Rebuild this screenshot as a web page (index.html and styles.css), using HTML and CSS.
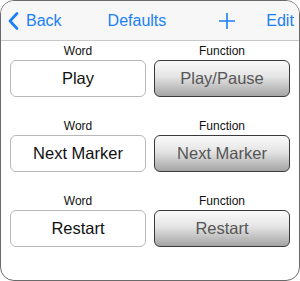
FILE: index.html
```html
<!DOCTYPE html>
<html lang="en">
<head>
    <meta charset="UTF-8">
    <meta name="viewport" content="width=device-width, initial-scale=1.0">
    <title>Defaults</title>
    <link rel="stylesheet" href="styles.css">
</head>
<body>
    <div class="frame">
        <div class="navbar">
            <a class="nav-back" href="#">
                <svg class="chevron" width="11" height="18" viewBox="0 0 11 18">
                    <path d="M9 1.5 L2 9 L9 16.5" fill="none" stroke="#1a7ff6" stroke-width="2.6" stroke-linecap="round" stroke-linejoin="round"/>
                </svg>
                <span>Back</span>
            </a>
            <span class="nav-title">Defaults</span>
            <a class="nav-add" href="#">
                <svg width="18" height="18" viewBox="0 0 18 18">
                    <path d="M9 1 V17 M1 9 H17" fill="none" stroke="#1a7ff6" stroke-width="1.6"/>
                </svg>
            </a>
            <a class="nav-edit" href="#">Edit</a>
        </div>

        <div class="list">
            <div class="row">
                <div class="cell">
                    <div class="label">Word</div>
                    <div class="word-box">Play</div>
                </div>
                <div class="cell">
                    <div class="label">Function</div>
                    <button class="func-btn">Play/Pause</button>
                </div>
            </div>
            <div class="row">
                <div class="cell">
                    <div class="label">Word</div>
                    <div class="word-box">Next Marker</div>
                </div>
                <div class="cell">
                    <div class="label">Function</div>
                    <button class="func-btn">Next Marker</button>
                </div>
            </div>
            <div class="row">
                <div class="cell">
                    <div class="label">Word</div>
                    <div class="word-box">Restart</div>
                </div>
                <div class="cell">
                    <div class="label">Function</div>
                    <button class="func-btn">Restart</button>
                </div>
            </div>
        </div>
    </div>
</body>
</html>
```

FILE: styles.css
```css
body {
    margin: 0;
    font-family: "Liberation Sans", Arial, sans-serif;
    background: #ffffff;
}

.frame {
    width: 300px;
    height: 281px;
    box-sizing: border-box;
    border: 1px solid #6a6a6a;
    border-radius: 14px;
    overflow: hidden;
    background: #ffffff;
}

.navbar {
    height: 39px;
    display: flex;
    align-items: center;
    padding: 0 7px;
    background: #f7f7f7;
    border-bottom: 1px solid #c8c8c8;
    color: #1a7ff6;
    font-size: 16px;
}

.navbar a {
    color: #1a7ff6;
    text-decoration: none;
}

.nav-back {
    display: flex;
    align-items: center;
}

.chevron {
    margin-right: 7px;
}

.nav-title {
    margin-left: 46px;
}

.nav-add {
    display: flex;
    margin-left: 52px;
}

.nav-edit {
    margin-left: 30px;
}

.list {
    padding: 3px 10px 0 9px;
}

.row {
    display: grid;
    grid-template-columns: 136px 136px;
    column-gap: 8px;
    margin-bottom: 22px;
}

.cell {
    display: flex;
    flex-direction: column;
    align-items: stretch;
}

.label {
    font-size: 12px;
    line-height: 14px;
    text-align: center;
    color: #111;
    margin-bottom: 2px;
}

.word-box,
.func-btn {
    height: 37px;
    box-sizing: border-box;
    border-radius: 6px;
    font-family: "Liberation Sans", Arial, sans-serif;
    font-size: 16.5px;
    display: flex;
    align-items: center;
    justify-content: center;
}

.word-box {
    border: 1px solid #b8b8b8;
    background: #ffffff;
    color: #111;
}

.func-btn {
    width: 100%;
    border: 1px solid #3a3a3a;
    background: linear-gradient(to bottom, #fafafa, #e4e4e4 45%, #a4a4a4);
    color: #555;
    padding: 0;
}
```
